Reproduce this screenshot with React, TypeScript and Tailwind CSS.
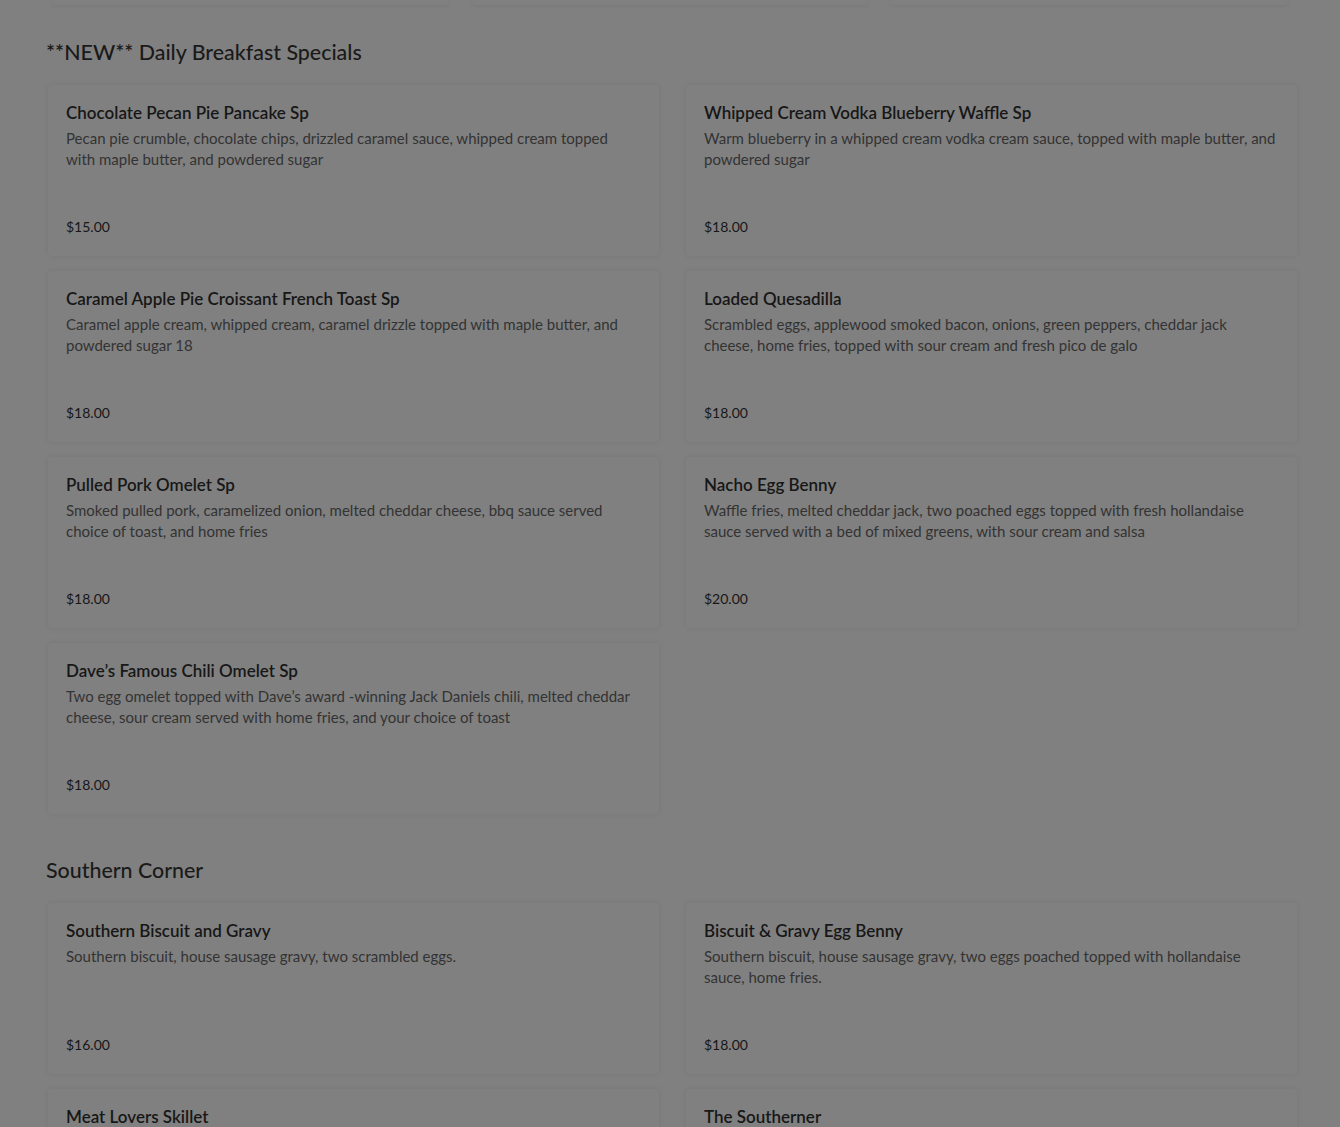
import React from "react";

type Item = { name: string; desc: string; price: string };

const specials: Item[] = [
  {
    name: "Chocolate Pecan Pie Pancake Sp",
    desc: "Pecan pie crumble, chocolate chips, drizzled caramel sauce, whipped cream topped with maple butter, and powdered sugar",
    price: "$15.00",
  },
  {
    name: "Whipped Cream Vodka Blueberry Waffle Sp",
    desc: "Warm blueberry in a whipped cream vodka cream sauce, topped with maple butter, and powdered sugar",
    price: "$18.00",
  },
  {
    name: "Caramel Apple Pie Croissant French Toast Sp",
    desc: "Caramel apple cream, whipped cream, caramel drizzle topped with maple butter, and powdered sugar 18",
    price: "$18.00",
  },
  {
    name: "Loaded Quesadilla",
    desc: "Scrambled eggs, applewood smoked bacon, onions, green peppers, cheddar jack cheese, home fries, topped with sour cream and fresh pico de galo",
    price: "$18.00",
  },
  {
    name: "Pulled Pork Omelet Sp",
    desc: "Smoked pulled pork, caramelized onion, melted cheddar cheese, bbq sauce served choice of toast, and home fries",
    price: "$18.00",
  },
  {
    name: "Nacho Egg Benny",
    desc: "Waffle fries, melted cheddar jack, two poached eggs topped with fresh hollandaise sauce served with a bed of mixed greens, with sour cream and salsa",
    price: "$20.00",
  },
  {
    name: "Dave’s Famous Chili Omelet Sp",
    desc: "Two egg omelet topped with Dave’s award -winning Jack Daniels chili, melted cheddar cheese, sour cream served with home fries, and your choice of toast",
    price: "$18.00",
  },
];

const southern: Item[] = [
  {
    name: "Southern Biscuit and Gravy",
    desc: "Southern biscuit, house sausage gravy, two scrambled eggs.",
    price: "$16.00",
  },
  {
    name: "Biscuit & Gravy Egg Benny",
    desc: "Southern biscuit, house sausage gravy, two eggs poached topped with hollandaise sauce, home fries.",
    price: "$18.00",
  },
  { name: "Meat Lovers Skillet", desc: "", price: "" },
  { name: "The Southerner", desc: "", price: "" },
];

function Card({ item }: { item: Item }) {
  return (
    <div className="flex h-[171px] flex-col rounded-[4px] bg-[#808080] pt-[18px] pr-[21px] pb-[20px] pl-[18px] shadow-[0_0_6px_rgba(0,0,0,0.07)]">
      <div className="text-[17px] leading-[20px] font-semibold text-[#171717]">{item.name}</div>
      <div className="mt-[5px] text-[15px] leading-[21px] text-[#333333]">{item.desc}</div>
      <div className="mt-auto text-[14px] leading-[18px] text-[#171717]">{item.price}</div>
    </div>
  );
}

function Section({ title, items }: { title: string; items: Item[] }) {
  return (
    <section>
      <h2 className="ml-[-2px] text-[21.4px] leading-[26px] font-medium text-[#1a1a1a]">{title}</h2>
      <div className="mt-[20px] grid grid-cols-2 gap-x-[27px] gap-y-[15px]">
        {items.map((it) => (
          <Card key={it.name} item={it} />
        ))}
      </div>
    </section>
  );
}

export default function App() {
  return (
    <div
      className="h-[1127px] overflow-hidden bg-[#808080]"
      style={{ fontFamily: "Lato, 'Noto Sans', sans-serif" }}
    >
      <div className="grid grid-cols-3 gap-[23px] px-[52px]">
        <div className="h-[5px] rounded-b-[4px] shadow-[0_1px_4px_rgba(0,0,0,0.07)]" />
        <div className="h-[5px] rounded-b-[4px] shadow-[0_1px_4px_rgba(0,0,0,0.07)]" />
        <div className="h-[5px] rounded-b-[4px] shadow-[0_1px_4px_rgba(0,0,0,0.07)]" />
      </div>
      <div className="flex flex-col gap-[43px] pt-[34px] pr-[43px] pl-[48px]">
        <Section title="**NEW** Daily Breakfast Specials" items={specials} />
        <Section title="Southern Corner" items={southern} />
      </div>
    </div>
  );
}
